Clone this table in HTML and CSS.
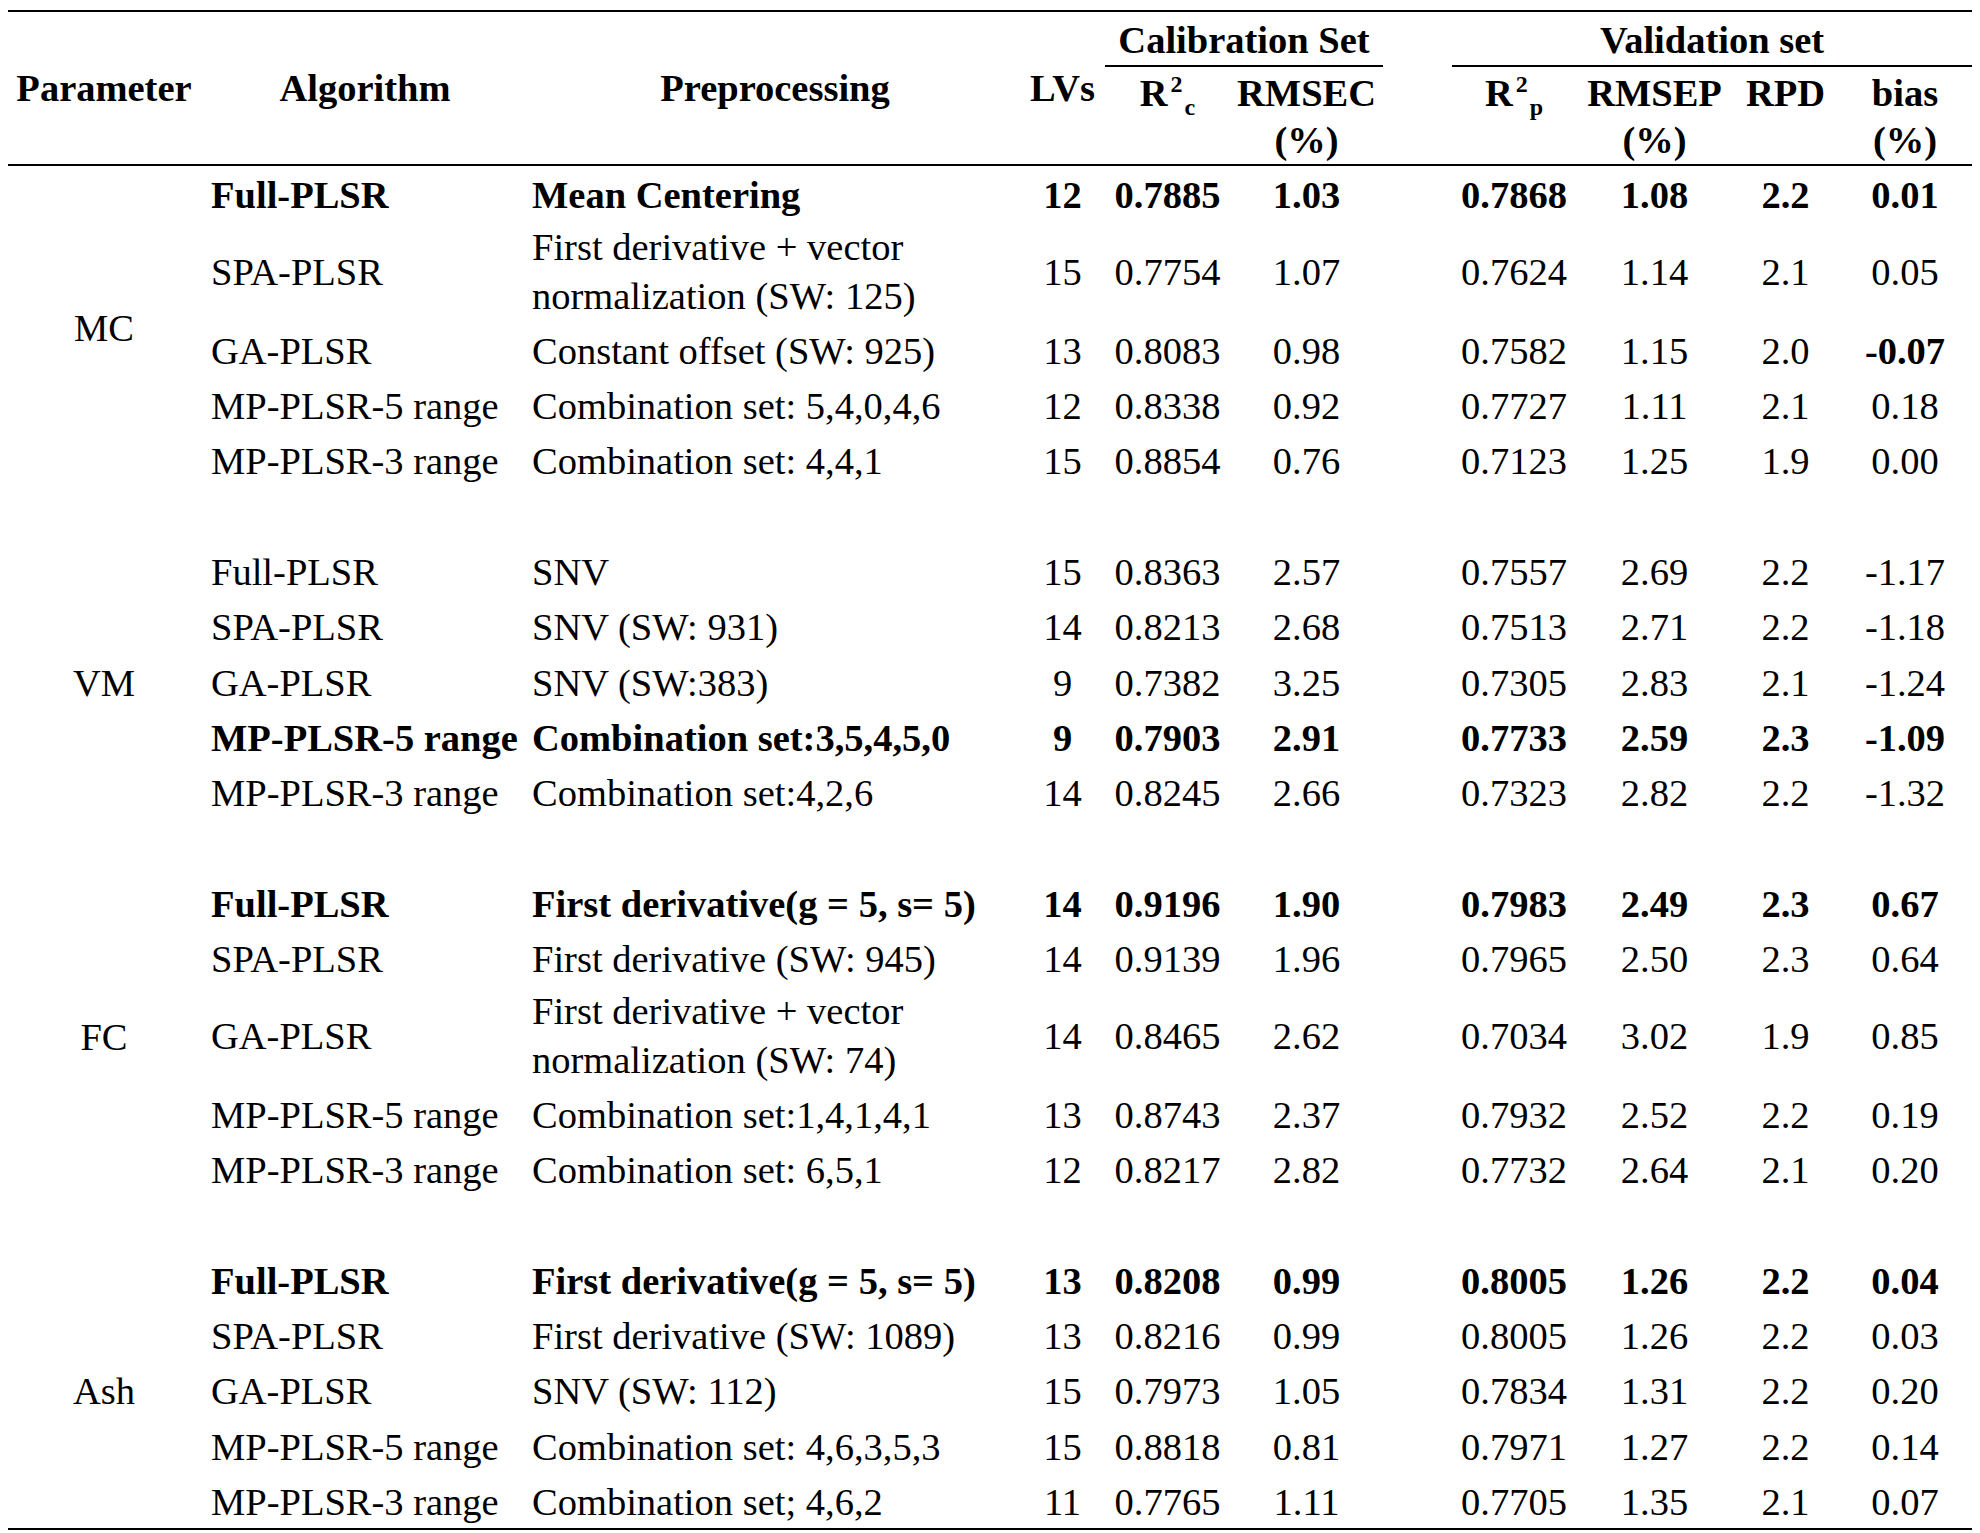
FILE: index.html
```html
<!DOCTYPE html>
<html lang="en">
<head>
<meta charset="utf-8">
<title>Model results</title>
<link rel="stylesheet" href="styles.css">
</head>
<body>
<div class="page">
<table class="results">
  <colgroup>
    <col class="c-param">
    <col class="c-algo">
    <col class="c-pre">
    <col class="c-lv">
    <col class="c-r2c">
    <col class="c-rmsec">
    <col class="c-gap">
    <col class="c-r2p">
    <col class="c-rmsep">
    <col class="c-rpd">
    <col class="c-bias">
  </colgroup>
  <thead>
    <tr class="h1">
      <th rowspan="2" class="span">Parameter</th>
      <th rowspan="2" class="span">Algorithm</th>
      <th rowspan="2" class="span">Preprocessing</th>
      <th rowspan="2" class="span">LVs</th>
      <th colspan="2" class="group">Calibration Set</th>
      <th class="gap"></th>
      <th colspan="4" class="group">Validation set</th>
    </tr>
    <tr class="h2">
      <th class="sub">R<sup>2</sup><sub>c</sub></th>
      <th class="sub">RMSEC<br>(%)</th>
      <th class="sub"></th>
      <th class="sub">R<sup>2</sup><sub>p</sub></th>
      <th class="sub">RMSEP<br>(%)</th>
      <th class="sub">RPD</th>
      <th class="sub">bias<br>(%)</th>
    </tr>
  </thead>
  <tbody>
    <tr class="best">
      <td rowspan="5" class="param">MC</td>
      <td class="algo">Full-PLSR</td><td class="pre">Mean Centering</td>
      <td>12</td><td>0.7885</td><td>1.03</td><td></td><td>0.7868</td><td>1.08</td><td>2.2</td><td>0.01</td>
    </tr>
    <tr class="two">
      <td class="algo">SPA-PLSR</td><td class="pre">First derivative + vector<br>normalization (SW: 125)</td>
      <td>15</td><td>0.7754</td><td>1.07</td><td></td><td>0.7624</td><td>1.14</td><td>2.1</td><td>0.05</td>
    </tr>
    <tr>
      <td class="algo">GA-PLSR</td><td class="pre">Constant offset (SW: 925)</td>
      <td>13</td><td>0.8083</td><td>0.98</td><td></td><td>0.7582</td><td>1.15</td><td>2.0</td><td class="strong">-0.07</td>
    </tr>
    <tr>
      <td class="algo">MP-PLSR-5 range</td><td class="pre">Combination set: 5,4,0,4,6</td>
      <td>12</td><td>0.8338</td><td>0.92</td><td></td><td>0.7727</td><td>1.11</td><td>2.1</td><td>0.18</td>
    </tr>
    <tr>
      <td class="algo">MP-PLSR-3 range</td><td class="pre">Combination set: 4,4,1</td>
      <td>15</td><td>0.8854</td><td>0.76</td><td></td><td>0.7123</td><td>1.25</td><td>1.9</td><td>0.00</td>
    </tr>
    <tr class="blank"><td colspan="11"></td></tr>

    <tr>
      <td rowspan="5" class="param">VM</td>
      <td class="algo">Full-PLSR</td><td class="pre">SNV</td>
      <td>15</td><td>0.8363</td><td>2.57</td><td></td><td>0.7557</td><td>2.69</td><td>2.2</td><td>-1.17</td>
    </tr>
    <tr>
      <td class="algo">SPA-PLSR</td><td class="pre">SNV (SW: 931)</td>
      <td>14</td><td>0.8213</td><td>2.68</td><td></td><td>0.7513</td><td>2.71</td><td>2.2</td><td>-1.18</td>
    </tr>
    <tr>
      <td class="algo">GA-PLSR</td><td class="pre">SNV (SW:383)</td>
      <td>9</td><td>0.7382</td><td>3.25</td><td></td><td>0.7305</td><td>2.83</td><td>2.1</td><td>-1.24</td>
    </tr>
    <tr class="best">
      <td class="algo">MP-PLSR-5 range</td><td class="pre">Combination set:3,5,4,5,0</td>
      <td>9</td><td>0.7903</td><td>2.91</td><td></td><td>0.7733</td><td>2.59</td><td>2.3</td><td>-1.09</td>
    </tr>
    <tr>
      <td class="algo">MP-PLSR-3 range</td><td class="pre">Combination set:4,2,6</td>
      <td>14</td><td>0.8245</td><td>2.66</td><td></td><td>0.7323</td><td>2.82</td><td>2.2</td><td>-1.32</td>
    </tr>
    <tr class="blank"><td colspan="11"></td></tr>

    <tr class="best">
      <td rowspan="5" class="param">FC</td>
      <td class="algo">Full-PLSR</td><td class="pre">First derivative(g = 5, s= 5)</td>
      <td>14</td><td>0.9196</td><td>1.90</td><td></td><td>0.7983</td><td>2.49</td><td>2.3</td><td>0.67</td>
    </tr>
    <tr>
      <td class="algo">SPA-PLSR</td><td class="pre">First derivative (SW: 945)</td>
      <td>14</td><td>0.9139</td><td>1.96</td><td></td><td>0.7965</td><td>2.50</td><td>2.3</td><td>0.64</td>
    </tr>
    <tr class="two">
      <td class="algo">GA-PLSR</td><td class="pre">First derivative + vector<br>normalization (SW: 74)</td>
      <td>14</td><td>0.8465</td><td>2.62</td><td></td><td>0.7034</td><td>3.02</td><td>1.9</td><td>0.85</td>
    </tr>
    <tr>
      <td class="algo">MP-PLSR-5 range</td><td class="pre">Combination set:1,4,1,4,1</td>
      <td>13</td><td>0.8743</td><td>2.37</td><td></td><td>0.7932</td><td>2.52</td><td>2.2</td><td>0.19</td>
    </tr>
    <tr>
      <td class="algo">MP-PLSR-3 range</td><td class="pre">Combination set: 6,5,1</td>
      <td>12</td><td>0.8217</td><td>2.82</td><td></td><td>0.7732</td><td>2.64</td><td>2.1</td><td>0.20</td>
    </tr>
    <tr class="blank"><td colspan="11"></td></tr>

    <tr class="best">
      <td rowspan="5" class="param">Ash</td>
      <td class="algo">Full-PLSR</td><td class="pre">First derivative(g = 5, s= 5)</td>
      <td>13</td><td>0.8208</td><td>0.99</td><td></td><td>0.8005</td><td>1.26</td><td>2.2</td><td>0.04</td>
    </tr>
    <tr>
      <td class="algo">SPA-PLSR</td><td class="pre">First derivative (SW: 1089)</td>
      <td>13</td><td>0.8216</td><td>0.99</td><td></td><td>0.8005</td><td>1.26</td><td>2.2</td><td>0.03</td>
    </tr>
    <tr>
      <td class="algo">GA-PLSR</td><td class="pre">SNV (SW: 112)</td>
      <td>15</td><td>0.7973</td><td>1.05</td><td></td><td>0.7834</td><td>1.31</td><td>2.2</td><td>0.20</td>
    </tr>
    <tr>
      <td class="algo">MP-PLSR-5 range</td><td class="pre">Combination set: 4,6,3,5,3</td>
      <td>15</td><td>0.8818</td><td>0.81</td><td></td><td>0.7971</td><td>1.27</td><td>2.2</td><td>0.14</td>
    </tr>
    <tr>
      <td class="algo">MP-PLSR-3 range</td><td class="pre">Combination set; 4,6,2</td>
      <td>11</td><td>0.7765</td><td>1.11</td><td></td><td>0.7705</td><td>1.35</td><td>2.1</td><td>0.07</td>
    </tr>
  </tbody>
</table>
</div>
</body>
</html>
```

FILE: styles.css
```css
html, body {
  margin: 0;
  padding: 0;
  background: #ffffff;
}

.page {
  padding: 10px 8px 0 8px;
}

.results {
  width: 1964px;
  table-layout: fixed;
  border-collapse: separate;
  border-spacing: 0;
  border-top: 2px solid #000;
  border-bottom: 2px solid #000;
  font-family: "Liberation Serif", "Times New Roman", serif;
  font-size: 38.5px;
  color: #000;
}

.c-param { width: 192px; }
.c-algo  { width: 330px; }
.c-pre   { width: 490px; }
.c-lv    { width: 85px; }
.c-r2c   { width: 125px; }
.c-rmsec { width: 153px; }
.c-gap   { width: 69px; }
.c-r2p   { width: 124px; }
.c-rmsep { width: 157px; }
.c-rpd   { width: 105px; }
.c-bias  { width: 134px; }

.results th {
  font-weight: bold;
  text-align: center;
  padding: 0;
  white-space: nowrap;
}

.h1 th {
  line-height: 47px;
  vertical-align: top;
  padding-top: 5px;
  padding-bottom: 1px;
}

.h1 th.span {
  vertical-align: middle;
  padding: 0;
  border-bottom: 2px solid #000;
}

.h1 th.group {
  border-bottom: 2px solid #000;
}

.h2 th {
  line-height: 47px;
  vertical-align: top;
  padding-top: 3px;
  border-bottom: 2px solid #000;
}

.results sup,
.results sub {
  font-size: 24px;
  line-height: 0;
  position: relative;
  vertical-align: baseline;
}

.results sup {
  top: -14px;
  margin-left: 3px;
}

.results sub {
  top: 9px;
  margin-left: 2px;
}

.results td {
  box-sizing: border-box;
  height: 55.35px;
  line-height: 50px;
  padding: 3px 0 0 0;
  text-align: center;
  vertical-align: middle;
  white-space: nowrap;
}

.results tr.two td {
  line-height: 49px;
  padding-top: 2px;
}

.results tr.blank td {
  padding: 0;
}

.results td.algo {
  text-align: left;
  padding-left: 11px;
}

.results td.pre {
  text-align: left;
  padding-left: 2px;
}

.results td.param {
  font-weight: normal;
}

.results tr.best td {
  font-weight: bold;
}

.results tr.best td.param {
  font-weight: normal;
}

.results td.strong {
  font-weight: bold;
}
```
